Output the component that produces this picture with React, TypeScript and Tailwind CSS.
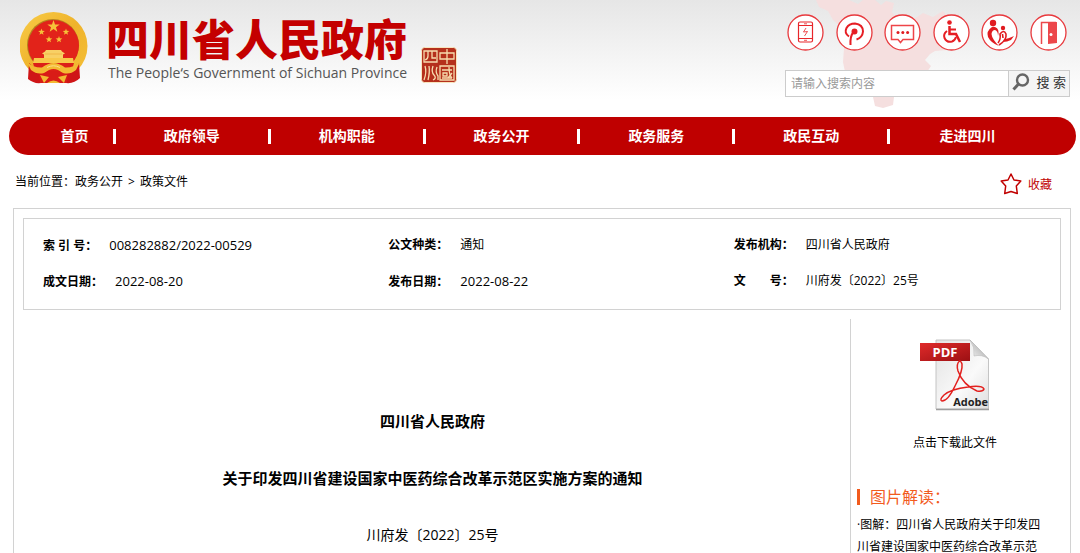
import React from "react";

const navItems = ["首页", "政府领导", "机构职能", "政务公开", "政务服务", "政民互动", "走进四川"];

const starPoints = (cx: number, cy: number, r: number) =>
  Array.from({ length: 10 }, (_, i) => {
    const radius = i % 2 === 0 ? r : r * 0.4;
    const angle = (Math.PI / 5) * i - Math.PI / 2;
    return `${(cx + radius * Math.cos(angle)).toFixed(2)},${(cy + radius * Math.sin(angle)).toFixed(2)}`;
  }).join(" ");

const Emblem = () => (
  <svg width="70" height="74" viewBox="0 0 70 74" className="shrink-0" aria-hidden="true">
    <defs>
      <linearGradient id="gold" x1="0" y1="0" x2="1" y2="1">
        <stop offset="0" stopColor="#f8cc48" />
        <stop offset="0.5" stopColor="#efb32b" />
        <stop offset="1" stopColor="#f5c038" />
      </linearGradient>
    </defs>
    <circle cx="33.5" cy="34" r="34" fill="url(#gold)" />
    <circle cx="33" cy="33" r="26" fill="#b5831f" />
    <circle cx="33.5" cy="33.5" r="25.5" fill="#e2231a" />
    <polygon points={starPoints(33.5, 14.5, 6.5)} fill="#f6c239" />
    <polygon points={starPoints(21.5, 20, 3.5)} fill="#f6c239" />
    <polygon points={starPoints(46, 20, 3.5)} fill="#f6c239" />
    <polygon points={starPoints(29, 27.5, 3.5)} fill="#f6c239" />
    <polygon points={starPoints(39, 27.5, 3.5)} fill="#f6c239" />
    <path d="M26 38 h15 l1 1.5 l3 2 l-2 1 v4 H24 v-4 l-2 -1 l3 -2 Z" fill="#f8d065" />
    <path d="M25 42 h17" stroke="#eeb040" strokeWidth="0.8" />
    <path d="M14 46 H53 L54 51 H13 Z" fill="#f8c84a" />
    <path d="M13 51 H54 L52 58 Q34 64 15 58 Z" fill="#dc1f18" />
    <path d="M9 51 Q16 58 26 60 L21 71 Q14 72 8 67 Z" fill="#cf1517" />
    <path d="M59 51 Q51 58 41 60 L46 71 Q54 72 60 66 Z" fill="#cf1517" />
    <path d="M20 71 L19 59 H48 L47 71 Z" fill="#d91c17" />
    <path
      d="M7 50 Q14 56 22 55.5 Q28 51 33.5 51 Q39 51 45 55.5 Q53 56 60 50 L56 58 Q50 63 43 61 L38 58 Q33.5 56 29 58 L24 61 Q17 63 11 58 Z"
      fill="#f3ba33"
    />
    <path d="M27 55.5 Q33.5 52 40 55.5" fill="none" stroke="#fbe08a" strokeWidth="1" />
    <path d="M20 63 L29 65 L24 71 Z M47 63 L38 65 L44 71 Z M27 71 Q33.5 66 40 71 Z" fill="#f3ba33" />
  </svg>
);

const Seal = () => (
  <svg width="36" height="36" viewBox="0 0 36 36" className="shrink-0" aria-hidden="true">
    <rect x="0.5" y="0.5" width="35" height="35" rx="3" fill="#b5301c" stroke="#f8e4bd" />
    <g fill="none" stroke="#f7dcae" strokeWidth="1.3">
      <path d="M3 4 H16 V15 H3 Z M7 4 V9 Q7 12 4 13 M11 4 V11 H15" />
      <path d="M19 6 H33 V12 H19 Z M26 2 V17" />
      <path d="M4 19 Q6 25 3 33 M8 19 Q9 25 7 33 M12 19 Q10 25 13 28 T12 33 M16 20 Q14 25 17 29 V33" />
      <path d="M19 19 H33 V33 H19 Z M21 23 H31 M22 26 H26 V29 H22 Z M21 31 H31 M28 20 Q28 28 31 31 M31 26 L27 31" />
    </g>
  </svg>
);

const MapBackdrop = () => (
  <svg
    width="150"
    height="108"
    viewBox="0 0 150 108"
    className="pointer-events-none absolute right-[119px] top-0 hidden md:block"
    aria-hidden="true"
  >
    <path
      d="M5 0 L8 7 L17 11 L22 20 L29 26 L33 21 L36 32 L33 48 L32 62 L34 72 L42 76 L52 82 L58 90 L62 97 L64 106 L72 108 L82 105 L83 97 L92 88 L94 76 L100 70 L108 74 L116 72 L120 66 L114 60 L119 54 L124 51 L136 50 L145 46 L140 38 L148 30 L142 22 L148 14 L136 16 L132 11 L122 17 L112 13 L103 19 L95 14 L86 18 L81 12 L83 3 L75 1 L70 5 L64 0 L52 0 L47 4 L38 0 Z"
      fill="#f5dfdf"
    />
  </svg>
);

const services = [
  {
    label: "手机版",
    icon: (
      <g fill="none" stroke="#e8262b" strokeWidth="1.2">
        <rect x="11.5" y="8" width="14" height="20" rx="1.5" />
        <path d="M11.5 11.5 H25.5 M11.5 24.5 H25.5" />
        <path d="M17 26.3 H20 M17 9.8 H20 M19 14 L16.5 18 L20.5 17.5 L17.5 22" strokeWidth="0.8" />
      </g>
    ),
  },
  {
    label: "网站导航",
    icon: (
      <g fill="none" stroke="#e61e24" strokeWidth="2">
        <path d="M13 22.5 Q8 19 10.5 14 Q13 9.5 19 9.5 Q27 10.5 27 17.5 Q26.5 23.5 20.5 25.5" />
        <circle cx="18.5" cy="17.5" r="2" fill="#e61e24" />
        <path d="M17.5 18 Q14 22 14.5 31" />
      </g>
    ),
  },
  {
    label: "互动交流",
    icon: (
      <g fill="none" stroke="#ee4448" strokeWidth="1.5">
        <path d="M7.5 11.5 H29.5 V25.5 H19 L16.5 28.5 L14 25.5 H7.5 Z" />
        <g fill="#e01b20" stroke="none">
          <circle cx="14" cy="18.5" r="1.5" />
          <circle cx="18.8" cy="18.5" r="1.5" />
          <circle cx="23.6" cy="18.5" r="1.5" />
        </g>
      </g>
    ),
  },
  {
    label: "无障碍",
    icon: (
      <g fill="none" stroke="#e61e24" strokeWidth="2.5">
        <circle cx="16.5" cy="8.5" r="2.3" fill="#e61e24" stroke="none" />
        <path d="M16.5 12 V20 H23 L27 28" />
        <path d="M16.5 15.5 H23" strokeWidth="2" />
        <path d="M14 17 Q10 20 11.5 24 Q14 29 19 27.5 Q22 26.5 23 23" strokeWidth="2" />
      </g>
    ),
  },
  {
    label: "长者助手",
    icon: (
      <g fill="#e01b20">
        <circle cx="12" cy="9" r="3.2" />
        <circle cx="22" cy="14" r="2.2" />
        <path d="M11 13 Q5 17 7 23 Q10 29 18 32 Q11 25 10.5 20 Q11 16 14 16 Q17 17 17 22 Q19 15 14 13 Q12 12.3 11 13 Z" />
        <path d="M18 31 Q26 26 25 20 Q23 15 19 20 Q20 25 17 29 M21.5 20 L22 24" fill="none" stroke="#e01b20" strokeWidth="1.6" />
        <path d="M23 25 Q27 25 33 22 L30 26 Q26 28 22 28 Z" />
      </g>
    ),
  },
  {
    label: "退出",
    icon: (
      <g>
        <path d="M11.5 30 V8.5 H26" fill="none" stroke="#ec474b" strokeWidth="1.5" />
        <path d="M18 9 L27 8 V29 L18 30 Z" fill="#ec474b" />
        <circle cx="21" cy="20.5" r="1.5" fill="#fff" />
      </g>
    ),
  },
];

const SearchGlyph = () => (
  <svg width="18" height="18" viewBox="0 0 18 18" fill="none" stroke="#666" aria-hidden="true">
    <circle cx="10.5" cy="7" r="5.5" strokeWidth="2.4" />
    <path d="M6.5 11 L1.5 16.5" strokeWidth="3" />
  </svg>
);

const PdfIcon = () => (
  <svg width="70" height="72" viewBox="0 0 70 72" aria-hidden="true">
    <defs>
      <linearGradient id="page" x1="0" y1="0" x2="1" y2="1">
        <stop offset="0" stopColor="#e2e2e2" />
        <stop offset="0.6" stopColor="#fafafa" />
        <stop offset="1" stopColor="#dedede" />
      </linearGradient>
      <linearGradient id="fold" x1="0" y1="1" x2="1" y2="0">
        <stop offset="0" stopColor="#f4f4f4" />
        <stop offset="1" stopColor="#9a9a9a" />
      </linearGradient>
      <linearGradient id="band" x1="0" y1="0" x2="1" y2="1">
        <stop offset="0" stopColor="#e02a2a" />
        <stop offset="1" stopColor="#9c1013" />
      </linearGradient>
    </defs>
    <path d="M16 1 H50 L68.5 20 V70 H16 Z" fill="url(#page)" stroke="#c4c4c4" />
    <path d="M16 70.5 H69" stroke="#9d9d9d" strokeWidth="1.5" />
    <path d="M50 1 Q55 8 54 17 Q62 15 68.5 20 Z" fill="url(#fold)" stroke="#b5b5b5" strokeWidth="0.5" />
    <rect x="0" y="4" width="50" height="18" fill="url(#band)" />
    <text x="25" y="18" textAnchor="middle" fill="#fff" fontSize="13" fontWeight="700" className="font-['Open_Sans']">
      PDF
    </text>
    <path
      d="M39.5 22 Q36 25 38 32 Q43 46 57 52 Q63 53 64 50 Q62 46 48 48 Q31 50 24 56 Q19 61 22 62 Q28 62 35 47 Q43 32 42 25 Q41 22 39.5 22 Z"
      fill="none"
      stroke="#e3211f"
      strokeWidth="1.5"
    />
    <text x="68" y="67" textAnchor="end" fill="#222" fontSize="11" fontWeight="700" className="font-['Open_Sans']">
      Adobe
    </text>
  </svg>
);

interface FieldProps {
  label: string;
  numeric?: boolean;
  children: React.ReactNode;
}

const Field = ({ label, numeric, children }: FieldProps) => (
  <div className="flex items-baseline pl-[19px]">
    <dt className="whitespace-pre font-bold">{label}</dt>
    <dd className={numeric ? "ml-3 text-[13px]" : "ml-3"}>{children}</dd>
  </div>
);

export default function App() {
  return (
    <div className="min-h-screen bg-white font-['Open_Sans','Noto_Sans_CJK_SC',sans-serif] text-[12px] leading-5 text-black">
      <header className="relative h-[117px] bg-linear-to-b from-[#e6e6e6] to-white to-85%">
        <MapBackdrop />
        <div className="relative flex items-start justify-between pl-5 pr-[10px]">
          <div className="flex pt-3">
            <Emblem />
            <div className="ml-4">
              <h1 className="mt-1 whitespace-nowrap text-[43px] font-black leading-[48px] text-[#c40000]">四川省人民政府</h1>
              <p className="whitespace-nowrap pl-[2px] text-[14px] leading-[18px] text-[#555]">
                The People‘s Government of Sichuan Province
              </p>
            </div>
            <div className="ml-[14px] pt-[35px]">
              <Seal />
            </div>
          </div>

          <div className="flex w-[285px] flex-col items-stretch pt-[14px]">
            <div className="flex justify-between pl-[2px] pr-[3px]">
              {services.map((item) => (
                <a key={item.label} href="#" title={item.label} aria-label={item.label}>
                  <svg width="37" height="37" viewBox="0 0 37 37">
                    <circle cx="18.5" cy="18.5" r="17.5" fill="#fff" stroke="#e8393d" strokeWidth="1.3" />
                    {item.icon}
                  </svg>
                </a>
              ))}
            </div>
            <form className="mt-[19px] flex h-[27px] border border-[#ccc] bg-white">
              <input
                type="text"
                aria-label="搜索"
                placeholder="请输入搜索内容"
                className="min-w-0 flex-1 px-[5px] text-[12px] outline-none placeholder:text-[#999]"
              />
              <button
                type="button"
                className="flex w-[61px] items-center justify-between border-l border-[#ccc] bg-[#f5f5f5] px-[3px] pb-1 text-[13px] text-[#333]"
              >
                <SearchGlyph />
                <span>搜 索</span>
              </button>
            </form>
          </div>
        </div>
      </header>

      <nav className="ml-[9px] mr-1 h-[38px] rounded-full bg-[#bf0000] pl-[27px] pr-[31px]">
        <ul className="flex h-full items-center text-[14px] font-bold text-white">
          {navItems.map((item, i) => (
            <li key={item} className={`flex items-center ${i === 0 ? "flex-[80]" : "flex-[155]"}`}>
              <a href="#" className="flex-1 whitespace-nowrap text-center">
                {item}
              </a>
              {i < navItems.length - 1 && <span className="h-[15px] w-[3px] bg-white" />}
            </li>
          ))}
        </ul>
      </nav>

      <div className="flex h-[53px] items-center justify-between pl-[15px] pr-7">
        <p>
          当前位置：<a href="#">政务公开</a>
          <span className="mx-[5px]">&gt;</span>
          <a href="#">政策文件</a>
        </p>
        <button type="button" className="flex items-center gap-[6px] pt-1 text-[#c00000]">
          <svg width="22" height="22" viewBox="0 0 22 22" fill="none" stroke="#c00000" strokeWidth="1.5" strokeLinejoin="round" aria-hidden="true">
            <path d="M11 1 L14 7 L20.8 8 L16.3 13 L17.3 20.5 L11 18.5 L4.7 20.5 L5.7 13 L1.2 8 L8 7 Z" />
          </svg>
          <span className="pt-[2px]">收藏</span>
        </button>
      </div>

      <main className="ml-[13px] mr-[9px] border border-b-0 border-[#d2d2d2] px-[9px] pt-[9px]">
        <dl className="grid grid-cols-3 gap-y-[15px] border border-[#d2d2d2] pb-[17px] pt-4">
          <Field label="索 引 号：" numeric>008282882/2022-00529</Field>
          <Field label="公文种类：">通知</Field>
          <Field label="发布机构：">四川省人民政府</Field>
          <Field label="成文日期：" numeric>2022-08-20</Field>
          <Field label="发布日期：" numeric>2022-08-22</Field>
          <Field label="文　　号：">川府发〔2022〕25号</Field>
        </dl>

        <div className="mt-[9px] flex">
          <article className="flex-1 pr-2 pt-[90px] text-center text-[15px] leading-6">
            <p className="font-bold">四川省人民政府</p>
            <h2 className="mt-[33px] font-bold">关于印发四川省建设国家中医药综合改革示范区实施方案的通知</h2>
            <p className="mt-[33px] text-[14px]">川府发〔2022〕25号</p>
          </article>
          <aside className="w-[211px] shrink-0 border-l border-[#d2d2d2] pl-[6px] pr-2">
            <a href="#" className="flex flex-col items-center pt-5">
              <PdfIcon />
              <span className="mt-[22px]">点击下载此文件</span>
            </a>
            <h3 className="mt-8 flex items-center gap-[10px] text-[16px] leading-6 text-[#f25b1d]">
              <span className="h-4 w-[3px] bg-[#f25b1d]" />
              图片解读：
            </h3>
            <a href="#" className="mt-[5px] block w-[188px] leading-[22px]">
              ·图解：四川省人民政府关于印发四川省建设国家中医药综合改革示范
            </a>
          </aside>
        </div>
      </main>
    </div>
  );
}
